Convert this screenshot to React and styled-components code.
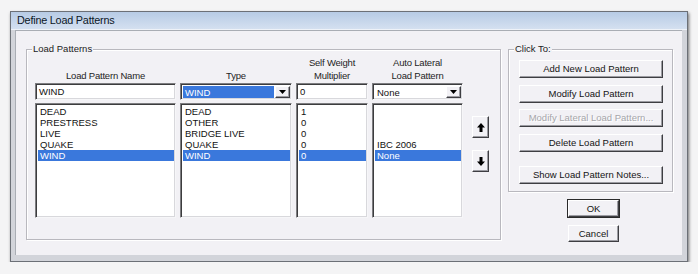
import React from "react";
import styled, { createGlobalStyle } from "styled-components";

const GlobalStyle = createGlobalStyle`
  body {
    margin: 0;
    background: #f4f4f5;
    font-family: "Liberation Sans", Arial, sans-serif;
  }
`;

const names = ["DEAD", "PRESTRESS", "LIVE", "QUAKE", "WIND"];
const types = ["DEAD", "OTHER", "BRIDGE LIVE", "QUAKE", "WIND"];
const weights = ["1", "0", "0", "0", "0"];
const laterals = ["", "", "", "IBC 2006", "None"];
const selected = 4;

export default function App() {
  return (
    <Page>
      <GlobalStyle />
      <Window>
        <TitleBar>Define Load Patterns</TitleBar>
        <Body>
          <Group $w={475} $h={191}>
            <Legend>Load Patterns</Legend>
            <Columns>
              <Column $w={141}>
                <Header>Load Pattern Name</Header>
                <TextBox>WIND</TextBox>
                <ListBox items={names} />
              </Column>
              <Column $w={112}>
                <Header>Type</Header>
                <Combo value="WIND" highlight />
                <ListBox items={types} />
              </Column>
              <Column $w={72}>
                <Header>
                  Self Weight
                  <br />
                  Multiplier
                </Header>
                <TextBox>0</TextBox>
                <ListBox items={weights} />
              </Column>
              <Column $w={91}>
                <Header>
                  Auto Lateral
                  <br />
                  Load Pattern
                </Header>
                <Combo value="None" />
                <ListBox items={laterals} />
              </Column>
              <ArrowColumn>
                <ArrowButton>
                  <Arrow up />
                </ArrowButton>
                <ArrowButton>
                  <Arrow />
                </ArrowButton>
              </ArrowColumn>
            </Columns>
          </Group>
          <RightColumn>
            <Group $w={165} $h={143}>
              <Legend>Click To:</Legend>
              <ButtonStack>
                <Button>Add New Load Pattern</Button>
                <Button $mt={7}>Modify Load Pattern</Button>
                <Button $mt={6} disabled>
                  Modify Lateral Load Pattern...
                </Button>
                <Button $mt={7}>Delete Load Pattern</Button>
                <Button $mt={14}>Show Load Pattern Notes...</Button>
              </ButtonStack>
            </Group>
            <DialogButtons>
              <SmallButton $default>OK</SmallButton>
              <SmallButton>Cancel</SmallButton>
            </DialogButtons>
          </RightColumn>
        </Body>
      </Window>
    </Page>
  );
}

function ListBox({ items }) {
  return (
    <List>
      {items.map((t, i) => (
        <Row key={i} $sel={i === selected}>
          {t}
        </Row>
      ))}
    </List>
  );
}

function Combo({ value, highlight }) {
  return (
    <ComboBox>
      <ComboValue $hl={highlight}>{value}</ComboValue>
      <DropButton>
        <svg width="7" height="4" viewBox="0 0 7 4">
          <polygon points="0,0 7,0 3.5,4" fill="#000" />
        </svg>
      </DropButton>
    </ComboBox>
  );
}

function Arrow({ up }) {
  return (
    <svg width="8" height="9" viewBox="0 0 8 9">
      {up ? (
        <polygon points="4,0 8,4.5 5.5,4.5 5.5,9 2.5,9 2.5,4.5 0,4.5" fill="#000" />
      ) : (
        <polygon points="4,9 8,4.5 5.5,4.5 5.5,0 2.5,0 2.5,4.5 0,4.5" fill="#000" />
      )}
    </svg>
  );
}

const Page = styled.div`
  padding: 11px 0 0 10px;
`;

const Window = styled.div`
  width: 678px;
  height: 251px;
  box-sizing: border-box;
  border: 1px solid #6c7077;
  background: #d2d4da;
  padding: 0 5px 6px 4px;
  display: flex;
  flex-direction: column;
  box-shadow: 1px 2px 3px rgba(0, 0, 0, 0.55);
`;

const TitleBar = styled.div`
  height: 18px;
  margin: 0 -5px 0 -4px;
  padding-left: 6px;
  background: linear-gradient(to bottom, #b7cbe5, #d4e0f0);
  border-bottom: 1px solid #eef2f8;
  box-sizing: border-box;
  font-size: 10.8px;
  line-height: 17px;
  color: #0b1626;
  letter-spacing: -0.2px;
`;

const Body = styled.div`
  flex: 1;
  background: #f2f1f5;
  display: flex;
  align-items: flex-start;
  padding: 19px 0 0 11px;
  box-shadow: inset 1px 1px 0 #a9adb4;
`;

const Group = styled.div`
  position: relative;
  box-sizing: border-box;
  width: ${(p) => p.$w}px;
  height: ${(p) => p.$h}px;
  border: 1px solid #b9b8be;
  box-shadow: inset 1px 1px 0 #fff, 1px 1px 0 #fff;
`;

const Legend = styled.span`
  position: absolute;
  top: -7px;
  left: 5px;
  padding: 0 1px;
  background: #f2f1f5;
  font-size: 9.5px;
  line-height: 12px;
  color: #1c1c1c;
`;

const Columns = styled.div`
  display: flex;
  gap: 4px;
  padding: 6px 0 0 8px;
`;

const Column = styled.div`
  width: ${(p) => p.$w}px;
  display: flex;
  flex-direction: column;
`;

const Header = styled.div`
  height: 27px;
  display: flex;
  align-items: flex-end;
  justify-content: center;
  text-align: center;
  font-size: 9.5px;
  line-height: 12.5px;
  letter-spacing: -0.2px;
  color: #1e1e1e;
  padding-bottom: 1px;
  box-sizing: border-box;
`;

const sunken = `
  box-sizing: border-box;
  background: #fff;
  border: 1px solid;
  border-color: #7d7d80 #f6f6f8 #f6f6f8 #7d7d80;
  box-shadow: inset 1px 1px 0 #3c3c3e, inset -1px -1px 0 #d8d8dc;
`;

const TextBox = styled.div`
  ${sunken}
  height: 17px;
  padding: 0 3px;
  font-size: 9.5px;
  line-height: 15px;
  color: #111;
`;

const ComboBox = styled.div`
  ${sunken}
  height: 17px;
  display: flex;
  padding: 2px 1px 1px 2px;
`;

const ComboValue = styled.div`
  flex: 1;
  font-size: 9.5px;
  line-height: 13px;
  padding: 0 2px;
  margin-right: 1px;
  color: ${(p) => (p.$hl ? "#fff" : "#111")};
  background: ${(p) => (p.$hl ? "#3a78dc" : "transparent")};
`;

const raised = `
  box-sizing: border-box;
  background: #f2f1f5;
  border: 1px solid;
  border-color: #fff #3e3e42 #3e3e42 #fff;
  box-shadow: inset -1px -1px 0 #9c9ca2;
`;

const DropButton = styled.div`
  ${raised}
  width: 15px;
  display: flex;
  align-items: center;
  justify-content: center;
`;

const List = styled.div`
  ${sunken}
  margin-top: 3px;
  height: 115px;
  padding: 2px 1px 0 2px;
`;

const Row = styled.div`
  height: 11px;
  font-size: 9.5px;
  line-height: 11px;
  padding-left: 2px;
  white-space: nowrap;
  color: ${(p) => (p.$sel ? "#fff" : "#111")};
  background: ${(p) => (p.$sel ? "#3a78dc" : "transparent")};
`;

const ArrowColumn = styled.div`
  display: flex;
  flex-direction: column;
  gap: 12px;
  margin-left: 5px;
  padding-top: 60px;
`;

const ArrowButton = styled.div`
  ${raised}
  width: 17px;
  height: 22px;
  display: flex;
  align-items: center;
  justify-content: center;
`;

const RightColumn = styled.div`
  margin-left: 7px;
  display: flex;
  flex-direction: column;
`;

const ButtonStack = styled.div`
  display: flex;
  flex-direction: column;
  padding: 10px 0 0 10px;
`;

const Button = styled.div`
  ${raised}
  width: 144px;
  height: 18px;
  margin-top: ${(p) => p.$mt || 0}px;
  text-align: center;
  font-size: 9.5px;
  line-height: 16px;
  color: ${(p) => (p.disabled ? "#a6a6aa" : "#141414")};
  text-shadow: ${(p) => (p.disabled ? "1px 1px 0 #fff" : "none")};
`;

const DialogButtons = styled.div`
  display: flex;
  flex-direction: column;
  gap: 8px;
  margin: 8px 0 0 60px;
`;

const SmallButton = styled.div`
  ${raised}
  width: 51px;
  height: 17px;
  text-align: center;
  font-size: 9.5px;
  line-height: 15px;
  color: #141414;
  ${(p) =>
    p.$default &&
    `
    outline: 1px solid #2a2a2a;
    outline-offset: 0;
  `}
`;
